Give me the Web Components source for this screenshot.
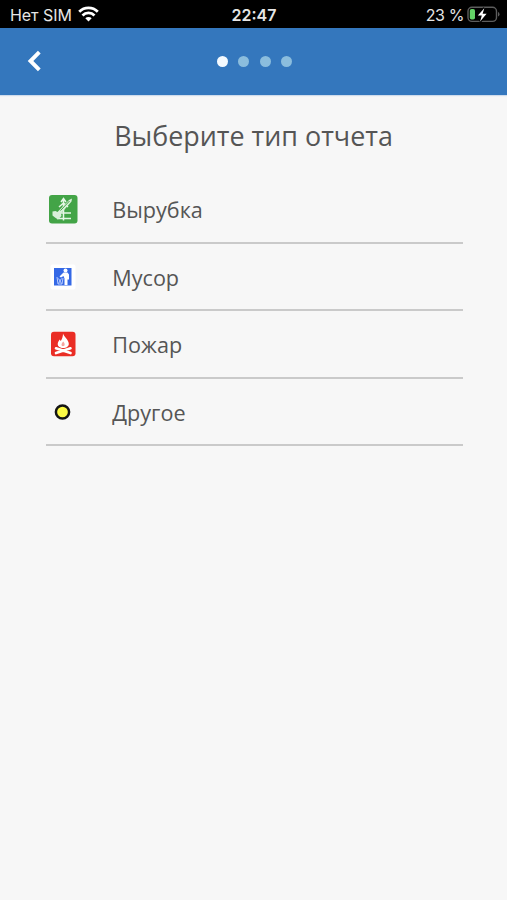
<!DOCTYPE html>
<html lang="ru">
<head>
<meta charset="UTF-8">
<meta name="viewport" content="width=device-width, initial-scale=1">
<title>Выберите тип отчета</title>
<style>
  html, body {
    margin: 0;
    height: 100%;
    background: #f7f7f7;
  }
</style>
</head>
<body>
<report-screen></report-screen>

<script>
class StatusBar extends HTMLElement {
  constructor() {
    super();
    this.attachShadow({ mode: 'open' });
    this.shadowRoot.innerHTML = `
      <style>
        :host {
          display: grid;
          grid-template-columns: 1fr auto 1fr;
          align-items: center;
          height: 28px;
          padding: 1px 7px 0 10px;
          box-sizing: border-box;
          background: #000;
          color: #e6e6e6;
          font: 16px/27px Inter, "Liberation Sans", sans-serif;
        }
        .side { display: flex; align-items: center; }
        .right { justify-content: flex-end; }
        span { padding-top: 1px; }
        .network { letter-spacing: -0.05px; }
        .time { font-weight: 600; margin-right: 2px; }
        .charge { letter-spacing: -0.4px; }
        svg { display: block; flex: none; margin-bottom: 2px; }
        .wifi { margin-left: 6px; }
        .battery { margin-left: 3px; }
      </style>
      <div class="side">
        <span class="network">${this.getAttribute('network')}</span>
        <svg class="wifi" width="21" height="16" viewBox="0 0 21 16" fill="none" stroke="#fff" stroke-width="2.8">
          <path d="M1.2 5.7a13.2 13.2 0 0 1 18.6 0"/>
          <path d="M4.5 9.4a8.5 8.5 0 0 1 12 0"/>
          <path d="M7.3 12.2a4.6 4.6 0 0 1 6.4 0l-3.2 3.3z" fill="#fff" stroke="none"/>
        </svg>
      </div>
      <span class="time">${this.getAttribute('time')}</span>
      <div class="side right">
        <span class="charge">${this.getAttribute('charge')}</span>
        <svg class="battery" width="33" height="17" viewBox="0 0 33 17">
          <rect x="1" y="1.2" width="28.5" height="14.2" rx="4" fill="none" stroke="#5d5d5d" stroke-width="1.4"/>
          <path d="M31 6v4.6q1.5-.5 1.5-2.3T31 6z" fill="#5d5d5d"/>
          <rect x="2.8" y="3" width="5.2" height="10.6" rx="1.8" fill="#63d266"/>
          <path d="M17.3 2.2l-6.500 7.300h4l-1.700 5.900 6.500-7.600h-4z" fill="#fff" stroke="#000" stroke-width="2.8" paint-order="stroke"/>
        </svg>
      </div>
    `;
  }
}

class StepHeader extends HTMLElement {
  constructor() {
    super();
    this.attachShadow({ mode: 'open' });
    const total = Number(this.getAttribute('steps'));
    const current = Number(this.getAttribute('current'));
    let dots = '';
    for (let i = 1; i <= total; i++) {
      dots += `<i class="${i === current ? 'active' : ''}"></i>`;
    }

    this.shadowRoot.innerHTML = `
      <style>
        :host {
          display: grid;
          grid-template-columns: 1fr auto 1fr;
          align-items: center;
          height: 67px;
          background: #3477bd;
          box-shadow: 0 1px 1px #cfdcec;
        }
        button {
          display: block;
          justify-self: start;
          margin: 0 0 2px 27px;
          padding: 0;
          border: 0;
          background: none;
        }
        svg { display: block; }
        .dots { display: flex; gap: 10.6px; padding-left: 2px; }
        i {
          width: 11px;
          height: 11px;
          border-radius: 50%;
          background: #8bbddd;
        }
        i.active { background: #f4faff; }
      </style>
      <button aria-label="Назад">
        <svg width="14" height="22" viewBox="0 0 14 22" fill="none" stroke="#fff" stroke-width="3.9">
          <path d="M12.3 2.2L3.5 11l8.8 8.8"/>
        </svg>
      </button>
      <div class="dots">${dots}</div>
    `;
  }
}

class ReportType extends HTMLElement {
  constructor() {
    super();
    this.attachShadow({ mode: 'open' });
    this.shadowRoot.innerHTML = `
      <style>
        :host {
          display: flex;
          align-items: center;
          height: 67.5px;
          box-sizing: border-box;
          border-bottom: 2px solid #cacaca;
        }
        .icon {
          display: flex;
          justify-content: center;
          width: 33px;
          margin-right: 33.3px;
        }
        .label { padding-top: 2px; }
      </style>
      <span class="icon"><slot name="icon"></slot></span>
      <span class="label"><slot></slot></span>
    `;
  }
}

class ReportScreen extends HTMLElement {
  constructor() {
    super();
    this.attachShadow({ mode: 'open' });
    this.shadowRoot.innerHTML = `
      <style>
        :host {
          display: flex;
          flex-direction: column;
          min-height: 100%;
          background: #f7f7f7;
          color: #555;
          font-family: "Open Sans", "Noto Sans", sans-serif;
        }
        h1 {
          margin: 21px 0 0;
          font-size: 26.9px;
          font-weight: 400;
          line-height: 40px;
          text-align: center;
        }
        .list {
          display: flex;
          flex-direction: column;
          margin: 20.3px 44px 0 46px;
          font-size: 21.6px;
          line-height: 30px;
        }
        svg { display: block; }
      </style>
      <status-bar network="Нет SIM" time="22:47" charge="23 %"></status-bar>
      <step-header steps="4" current="1"></step-header>
      <h1>Выберите тип отчета</h1>
      <div class="list">
        <report-type>
          <svg slot="icon" width="30" height="30" viewBox="0 0 30 30">
            <rect x="1" y="1" width="28.5" height="28.5" rx="3" fill="#43a447"/>
            <!-- дерево -->
            <path d="M15.500 4v22.500M13 8l2.500-3.500L18 8M11 13l4.500-4 4.500 4M12 19h11M9 24.500h14" stroke="#e6f7e6" stroke-width="1.500" fill="none"/>
            <!-- пила -->
            <path d="M4.500 17.500l3-.5 2 1 11.500-12 3-1.500-.5 3L13 19.500l.5 2.500-3.500 3.500-3-2-2.500-2z" fill="#d9f0d9"/>
            <path d="M12.500 16.500L21.500 7" stroke="#43a447" stroke-width="1"/>
          </svg>
          Вырубка
        </report-type>
        <report-type>
          <svg slot="icon" width="30" height="30" viewBox="0 0 30 30">
            <rect x="2.500" y="2.500" width="25" height="25" rx="2" fill="#fff"/>
            <rect x="6" y="6" width="17.500" height="17.500" fill="#3569e6"/>
            <circle cx="17.500" cy="8.500" r="2" fill="#fff"/>
            <path d="M15.500 10.500h4l1.500 2v5h-1.500v5.500h-3v-6.500l-1-2.500-2.500 1.500-1.500-1z" fill="#fff"/>
            <path d="M9 15l1 7h4l1-6M10.500 16.500l3 5M13.500 16.500l-3 5" stroke="#b9ccff" stroke-width="1" fill="none"/>
          </svg>
          Мусор
        </report-type>
        <report-type>
          <svg slot="icon" width="30" height="30" viewBox="0 0 30 30">
            <rect x="3" y="2.800" width="24.500" height="24.500" rx="3" fill="#ea2d25"/>
            <path d="M15 4.500c1 3.500 6 6.500 5.800 10.500-.1 2.500-2.500 4-5.600 4s-5.500-1.600-5.500-4c0-2 1.300-3 1.900-4.500l1.200 1.500C14 10 15 8 15 4.500z" fill="#fff"/>
            <path d="M15.200 12.500c2 2 2 4.500-.2 4.800-2.200-.3-1.600-2.800.2-4.800z" fill="#f6a39f"/>
            <path d="M8 19.300l14.500 4.800M22.500 19.300L8 24.100" stroke="#fff" stroke-width="2.600" stroke-linecap="round"/>
          </svg>
          Пожар
        </report-type>
        <report-type>
          <svg slot="icon" width="30" height="30" viewBox="0 0 30 30">
            <circle cx="14.500" cy="15" r="6.600" fill="#fdfb45" stroke="#151515" stroke-width="2.500"/>
          </svg>
          Другое
        </report-type>
      </div>
    `;
  }
}

customElements.define('status-bar', StatusBar);
customElements.define('step-header', StepHeader);
customElements.define('report-type', ReportType);
customElements.define('report-screen', ReportScreen);
</script>
</body>
</html>
